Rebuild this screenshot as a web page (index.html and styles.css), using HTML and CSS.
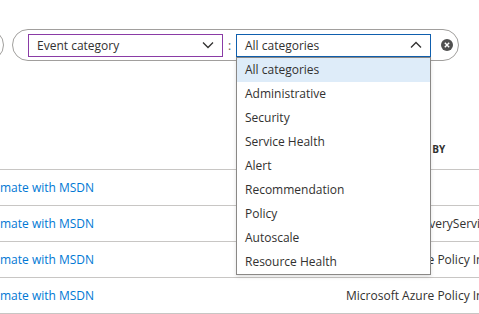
FILE: index.html
```html
<!DOCTYPE html>
<html>
<head>
<meta charset="utf-8">
<link rel="stylesheet" href="styles.css">
</head>
<body>
<div class="page">
  <div class="filters">
    <div class="pill pill-prev"></div>
    <div class="pill pill-main">
      <div class="select select-field">
        <span class="select-text">Event category</span>
        <svg class="chev" width="12" height="8" viewBox="0 0 12 8"><path d="M1 1.5 L6 6.5 L11 1.5" fill="none" stroke="#323130" stroke-width="1.3"/></svg>
      </div>
      <span class="colon">:</span>
      <div class="select select-value">
        <span class="select-text">All categories</span>
        <svg class="chev" width="12" height="8" viewBox="0 0 12 8"><path d="M1 6.5 L6 1.5 L11 6.5" fill="none" stroke="#323130" stroke-width="1.3"/></svg>
        <ul class="menu">
          <li class="menu-item selected">All categories</li>
          <li class="menu-item">Administrative</li>
          <li class="menu-item">Security</li>
          <li class="menu-item">Service Health</li>
          <li class="menu-item">Alert</li>
          <li class="menu-item">Recommendation</li>
          <li class="menu-item">Policy</li>
          <li class="menu-item">Autoscale</li>
          <li class="menu-item">Resource Health</li>
        </ul>
      </div>
      <span class="clear">
        <svg width="12" height="12" viewBox="0 0 12 12"><circle cx="6" cy="6" r="6" fill="#505050"/><path d="M3.8 3.8 L8.2 8.2 M8.2 3.8 L3.8 8.2" stroke="#fff" stroke-width="1.4"/></svg>
      </span>
    </div>
  </div>
  <div class="table">
    <div class="row head">
      <div class="cell"></div>
      <div class="cell th">EVENT INITIATED BY</div>
    </div>
    <div class="row">
      <div class="cell link">mate with MSDN</div>
      <div class="cell"></div>
    </div>
    <div class="row">
      <div class="cell link">mate with MSDN</div>
      <div class="cell">Microsoft.RecoveryServices</div>
    </div>
    <div class="row">
      <div class="cell link">mate with MSDN</div>
      <div class="cell">Microsoft Azure Policy Insights</div>
    </div>
    <div class="row">
      <div class="cell link">mate with MSDN</div>
      <div class="cell">Microsoft Azure Policy Insights</div>
    </div>
  </div>
</div>
</body>
</html>
```
FILE: styles.css
```css
html, body {
  margin: 0;
  padding: 0;
  background: #fff;
}
body {
  width: 479px;
  height: 314px;
  overflow: hidden;
  font-family: "Open Sans", "Noto Sans", sans-serif;
  font-size: 12px;
  color: #323130;
}
.page {
  padding-top: 29px;
}
.filters {
  display: flex;
  align-items: center;
  gap: 8px;
}
.pill {
  box-sizing: border-box;
  height: 32px;
  border: 1px solid #a19f9d;
  border-radius: 16px;
  flex: none;
}
.pill-prev {
  width: 44px;
  margin-left: -40px;
}
.pill-main {
  width: 447px;
  display: flex;
  align-items: center;
  padding-left: 15px;
}
.select {
  position: relative;
  box-sizing: border-box;
  width: 195px;
  height: 23px;
  display: flex;
  align-items: center;
  justify-content: space-between;
  padding: 0 8px 0 8px;
  flex: none;
}
.select-field {
  border: 1px solid #8a3ba6;
}
.select-value {
  border: 1px solid #0f5fae;
}
.colon {
  width: 13px;
  text-align: center;
  color: #605e5c;
}
.chev {
  display: block;
}
.clear {
  display: flex;
  margin-left: 10px;
}
.menu {
  position: absolute;
  left: -1px;
  top: 22px;
  width: 195px;
  box-sizing: border-box;
  margin: 0;
  padding: 0;
  list-style: none;
  background: #fff;
  border: 1px solid #8a8886;
  box-shadow: 0 2px 4px rgba(0,0,0,0.12);
  z-index: 5;
}
.menu-item {
  height: 24px;
  line-height: 24px;
  padding-left: 8px;
  white-space: nowrap;
}
.menu-item.selected {
  background: #deecf9;
}
.table {
  margin-top: 68px;
}
.row {
  display: grid;
  grid-template-columns: 346px 1fr;
  height: 35px;
  align-items: center;
  border-bottom: 1px solid #c8c6c4;
  white-space: nowrap;
}
.row.head {
  height: 40px;
}
.th {
  font-weight: 700;
  font-size: 10px;
  padding-left: 0;
}
.link {
  color: #0078d4;
}
```
